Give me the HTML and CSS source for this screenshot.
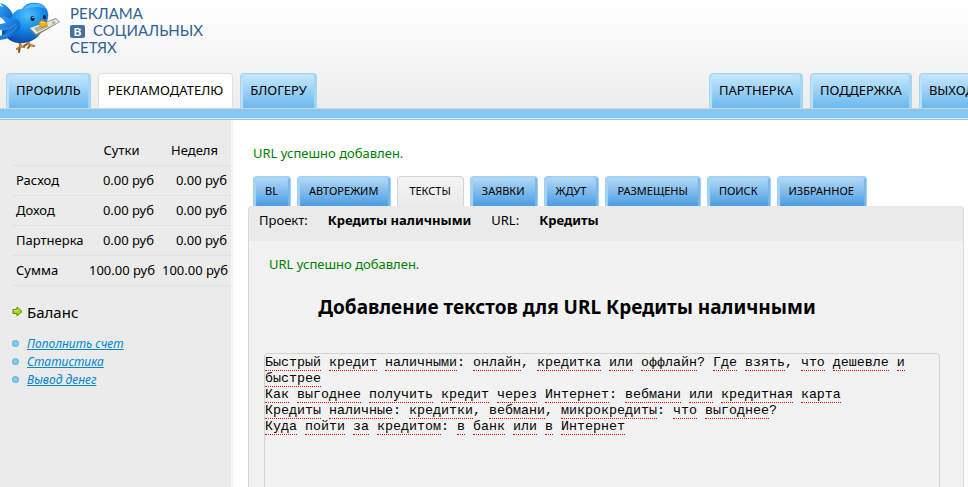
FILE: index.html
```html
<!DOCTYPE html>
<html lang="ru">
<head>
    <meta charset="UTF-8">
    <meta name="viewport" content="width=device-width, initial-scale=1.0">
    <title>Реклама в социальных сетях</title>
    <link rel="stylesheet" href="styles.css">
</head>
<body>
    <header class="header">
        <a class="logo" href="#" aria-label="Реклама в социальных сетях">
            <svg class="bird" width="62" height="56" viewBox="0 0 62 56" aria-hidden="true">
                <defs>
                    <radialGradient id="body" cx="0.55" cy="0.3" r="0.75">
                        <stop offset="0" stop-color="#4fc0fb"/>
                        <stop offset="0.45" stop-color="#168cea"/>
                        <stop offset="1" stop-color="#0746a8"/>
                    </radialGradient>
                    <linearGradient id="wing" x1="0" y1="0" x2="1" y2="1">
                        <stop offset="0" stop-color="#2ea2f2"/>
                        <stop offset="1" stop-color="#0a55bd"/>
                    </linearGradient>
                </defs>
                <path d="M19 42l2 4-4 3M20 46l4 1M20 46l-1 6M27 40l3 5-2 3M30 45l4 1M27 44l-3 2" fill="none" stroke="#8a5412" stroke-width="2" stroke-linecap="round"/>
                <path d="M19 42l2 4-4 3M20 46l4 1M27 40l3 5 4 1" fill="none" stroke="#d69a35" stroke-width="1"/>
                <path d="M14 17C11 9 6 4 0 3l3 4-3-1v11l10 7z" fill="url(#wing)"/>
                <path d="M22 9C25 4 30 2 36 3c6 0 11 4 12 10 1 5-1 9-4 14-3 8-10 15-20 16-8 1-14-2-18-6l-4 1v-7l3-4c2-3 4-5 6-9 2-5 5-9 11-9z" fill="url(#body)"/>
                <path d="M17 19C12 19 7 18 2 15c1 4 2 6 4 8l-6 1v6c4 1 7 0 9-1-3 4-6 6-9 7v4c8-1 17-5 20-12 1-4 0-7-3-9z" fill="url(#wing)"/>
                <path d="M0 29c6 1 11-1 16-5M3 37c6-2 11-6 14-11" fill="none" stroke="#3fa9ee" stroke-width="0.6"/>
                <path d="M24 9c3-4 8-6 13-5 4 0 7 2 9 5-7-3-14-2-22 0z" fill="#81d9ff" opacity="0.5"/>
                <ellipse cx="32.5" cy="18.500" rx="2" ry="2.500" fill="#071a35"/>
                <ellipse cx="44.500" cy="17" rx="1.500" ry="2" fill="#071a35"/>
                <circle cx="33" cy="17.500" r="0.700" fill="#fff"/>
                <path d="M29 28l27-10 4 4-24 14z" fill="#7f8870"/>
                <path d="M30 28l26-9 3 3-23 12z" fill="#e8ecd9"/>
                <path d="M34 28l20-7 2 2-19 9z" fill="#a9b399"/>
                <ellipse cx="49.500" cy="24" rx="3" ry="2" fill="#e4e8d6" transform="rotate(-24 49.500 24)"/>
                <path d="M39 23c0-2 2-3 4-2 3 0 5 3 4 5-1 1-3 0-4 1-2 1-4-2-4-4z" fill="#f5ae16" stroke="#bd7208" stroke-width="0.700"/>
                <path d="M41 23c1-1 3-1 4 0" fill="none" stroke="#ffe373" stroke-width="1"/>
            </svg>
            <span class="logo-text">РЕКЛАМА<br><span class="logo-badge">В</span>СОЦИАЛЬНЫХ<br>СЕТЯХ</span>
        </a>
        <nav class="main-nav">
            <a class="tab" href="#">ПРОФИЛЬ</a>
            <a class="tab active" href="#">РЕКЛАМОДАТЕЛЮ</a>
            <a class="tab" href="#">БЛОГЕРУ</a>
            <a class="tab push-right" href="#">ПАРТНЕРКА</a>
            <a class="tab" href="#">ПОДДЕРЖКА</a>
            <a class="tab" href="#">ВЫХОД</a>
        </nav>
    </header>

    <div class="page">
        <aside class="sidebar">
            <table class="stats">
                <thead>
                    <tr><td></td><th scope="col">Сутки</th><th scope="col">Неделя</th></tr>
                </thead>
                <tbody>
                    <tr><th scope="row">Расход</th><td>0.00 руб</td><td>0.00 руб</td></tr>
                    <tr><th scope="row">Доход</th><td>0.00 руб</td><td>0.00 руб</td></tr>
                    <tr><th scope="row">Партнерка</th><td>0.00 руб</td><td>0.00 руб</td></tr>
                    <tr><th scope="row">Сумма</th><td>100.00 руб</td><td>100.00 руб</td></tr>
                </tbody>
            </table>

            <h2 class="side-title">
                <svg width="11" height="11" viewBox="0 0 11 11" aria-hidden="true">
                    <path d="M1 3.500h4V1l5 4.500L5 10V7.500H1z" fill="#a4d911" stroke="#548b08" stroke-linejoin="round"/>
                    <path d="M2 4.500h4V3" fill="none" stroke="#dcf76c"/>
                </svg>
                Баланс
            </h2>
            <ul class="side-menu">
                <li><a href="#">Пополнить счет</a></li>
                <li><a href="#">Статистика</a></li>
                <li><a href="#">Вывод денег</a></li>
            </ul>
        </aside>

        <main class="content">
            <p class="message">URL успешно добавлен.</p>

            <nav class="sub-nav">
                <a class="sub-tab" href="#">BL</a>
                <a class="sub-tab" href="#">АВТОРЕЖИМ</a>
                <a class="sub-tab active" href="#">ТЕКСТЫ</a>
                <a class="sub-tab" href="#">ЗАЯВКИ</a>
                <a class="sub-tab" href="#">ЖДУТ</a>
                <a class="sub-tab" href="#">РАЗМЕЩЕНЫ</a>
                <a class="sub-tab" href="#">ПОИСК</a>
                <a class="sub-tab" href="#">ИЗБРАННОЕ</a>
            </nav>

            <section class="panel">
                <div class="project-bar">
                    <span>Проект:</span>
                    <b>Кредиты наличными</b>
                    <span>URL:</span>
                    <b>Кредиты</b>
                </div>
                <div class="panel-body">
                    <p class="message">URL успешно добавлен.</p>
                    <h1 id="texts-title">Добавление текстов для URL Кредиты наличными</h1>
                    <div class="editor">
                        <div class="marks" aria-hidden="true"></div>
                        <textarea class="texts" spellcheck="false" aria-labelledby="texts-title">Быстрый кредит наличными: онлайн, кредитка или оффлайн? Где взять, что дешевле и быстрее
Как выгоднее получить кредит через Интернет: вебмани или кредитная карта
Кредиты наличные: кредитки, вебмани, микрокредиты: что выгоднее?
Куда пойти за кредитом: в банк или в Интернет</textarea>
                    </div>
                </div>
            </section>
        </main>
    </div>

    <script src="script.js"></script>
</body>
</html>
```
FILE: styles.css
```css
* {
    box-sizing: border-box;
}

body {
    margin: 0;
    background-color: #fff;
    color: #000;
    font-family: "Noto Sans", sans-serif;
    font-size: 13px;
    line-height: 18px;
    overflow-x: hidden;
}

/* header */
.header {
    min-width: 991px;
    background-image: linear-gradient(#fff, #ededed);
}

.logo {
    display: flex;
    height: 73px;
    color: #2f6096;
    text-decoration: none;
}

.logo-text {
    margin: 5px 0 0 8px;
    font-family: Lato, sans-serif;
    font-size: 15px;
    line-height: 17px;
}

.logo-badge {
    display: inline-block;
    width: 15px;
    height: 13px;
    margin-right: 8px;
    border-radius: 2px;
    background-color: #45719d;
    color: #fff;
    font-size: 12px;
    font-weight: bold;
    line-height: 13px;
    text-align: center;
}

.main-nav {
    display: flex;
    gap: 7px;
    padding: 0 6px;
    border-bottom: 1px solid #d5d5d5;
}

.tab {
    height: 35px;
    padding: 0 9px;
    border: 1px solid #a9d4ee;
    border-bottom: 0;
    border-radius: 4px 4px 0 0;
    background-image: linear-gradient(#c9e8fd, #6ab8ed);
    box-shadow: inset 2px 1px 1px #bce2fa, inset -2px 0 1px #a3d5f6;
    color: #000;
    line-height: 33px;
    text-decoration: none;
}

.tab.active {
    border-color: #e0e0e0;
    background: #fff;
    box-shadow: none;
}

.push-right {
    margin-left: auto;
}

.page {
    display: flex;
    border-top: 9px solid #87c7f6;
    box-shadow: inset 0 1px #d5edfd, inset 0 2px #87c7f6;
    min-height: calc(100vh - 109px);
}

/* left column */
.sidebar {
    flex: 0 0 233px;
    margin-top: 2px;
    padding: 15px 0 0 12px;
    border-right: 2px solid #f4f4f4;
    background-color: #ebebeb;
}

.stats {
    width: 100%;
    table-layout: fixed;
    border-collapse: collapse;
}

.stats tr {
    border-bottom: 1px solid #e1e1e1;
    box-shadow: 0 1px #f3f3f3;
}

.stats th,
.stats td {
    height: 30px;
    padding: 0 4px;
    font-weight: normal;
    text-align: right;
    white-space: nowrap;
}

.stats thead th {
    text-align: center;
}

.stats tbody th {
    text-align: left;
}

.side-title {
    display: flex;
    align-items: center;
    gap: 4px;
    margin: 16px 0 13px;
    font-size: 15px;
    font-weight: normal;
    line-height: 20px;
}

.side-menu {
    margin: 0;
    padding: 0;
    list-style: none;
}

.side-menu li {
    display: flex;
    align-items: center;
    gap: 8px;
}

.side-menu li::before {
    content: "";
    width: 7px;
    height: 7px;
    border-radius: 50%;
    background-image: radial-gradient(#94d4f5, #55abdf);
}

.side-menu a {
    color: #0088cc;
    font-size: 12px;
    font-style: italic;
}

/* content */
.content {
    flex: 1;
    min-width: 0;
    padding: 26px 4px 0 15px;
}

.message {
    margin: 0 0 14px 5px;
    color: #008000;
}

.sub-nav {
    display: flex;
    gap: 6px;
    padding-left: 5px;
}

.sub-tab {
    height: 30px;
    padding: 0 12px 0 11px;
    border: 1px solid #a3cfee;
    border-bottom: 0;
    border-radius: 4px 4px 0 0;
    background-image: linear-gradient(#b5dbf8, #4b9ce2);
    box-shadow: inset 2px 1px 1px #a6d4f7, inset -2px 0 1px #78b9ed;
    color: #000;
    font-size: 11px;
    line-height: 28px;
    text-decoration: none;
}

.sub-tab.active {
    border-color: #d5d5d5;
    background: linear-gradient(#f4f4f4, #eaeaea);
    box-shadow: none;
}

.panel {
    border: 1px solid #d8d8d8;
    border-top: 0;
    border-radius: 4px 4px 0 0;
    background-color: #f2f2f2;
}

.project-bar {
    display: flex;
    gap: 20px;
    height: 35px;
    padding: 0 10px;
    border-radius: 4px 4px 0 0;
    background-color: #eaeaea;
    line-height: 29px;
}

.panel-body {
    padding: 14px 23px 24px 15px;
}

.panel-body h1 {
    margin: 22px 0 34px;
    padding-right: 70px;
    font-size: 19px;
    line-height: 24px;
    text-align: center;
}

/* textarea and the layer with spelling marks share one cell */
.editor {
    display: grid;
    border: 1px solid #d3d3d3;
    border-radius: 4px;
    font: 10pt/16px "Liberation Mono", monospace;
}

.marks,
.texts {
    grid-area: 1 / 1;
    width: 100%;
    height: 240px;
    margin: 0;
    padding: 1px 0;
    border: 0;
    background: transparent;
    font: inherit;
    white-space: pre-wrap;
    resize: none;
}

.marks {
    color: transparent;
}

.marks span {
    border-bottom: 1px dotted #f00;
}

.texts {
    color: #000;
    outline: 0;
}
```
FILE: script.js
```js
const texts = document.querySelector('.texts');
const marks = document.querySelector('.marks');

function updateMarks() {
    marks.textContent = '';
    texts.value.split(/([а-яё]+)/i).forEach((part, index) => {
        if (index % 2) {
            const word = document.createElement('span');
            word.textContent = part;
            marks.append(word);
        } else {
            marks.append(part);
        }
    });
}

texts.addEventListener('input', updateMarks);
updateMarks();
```
